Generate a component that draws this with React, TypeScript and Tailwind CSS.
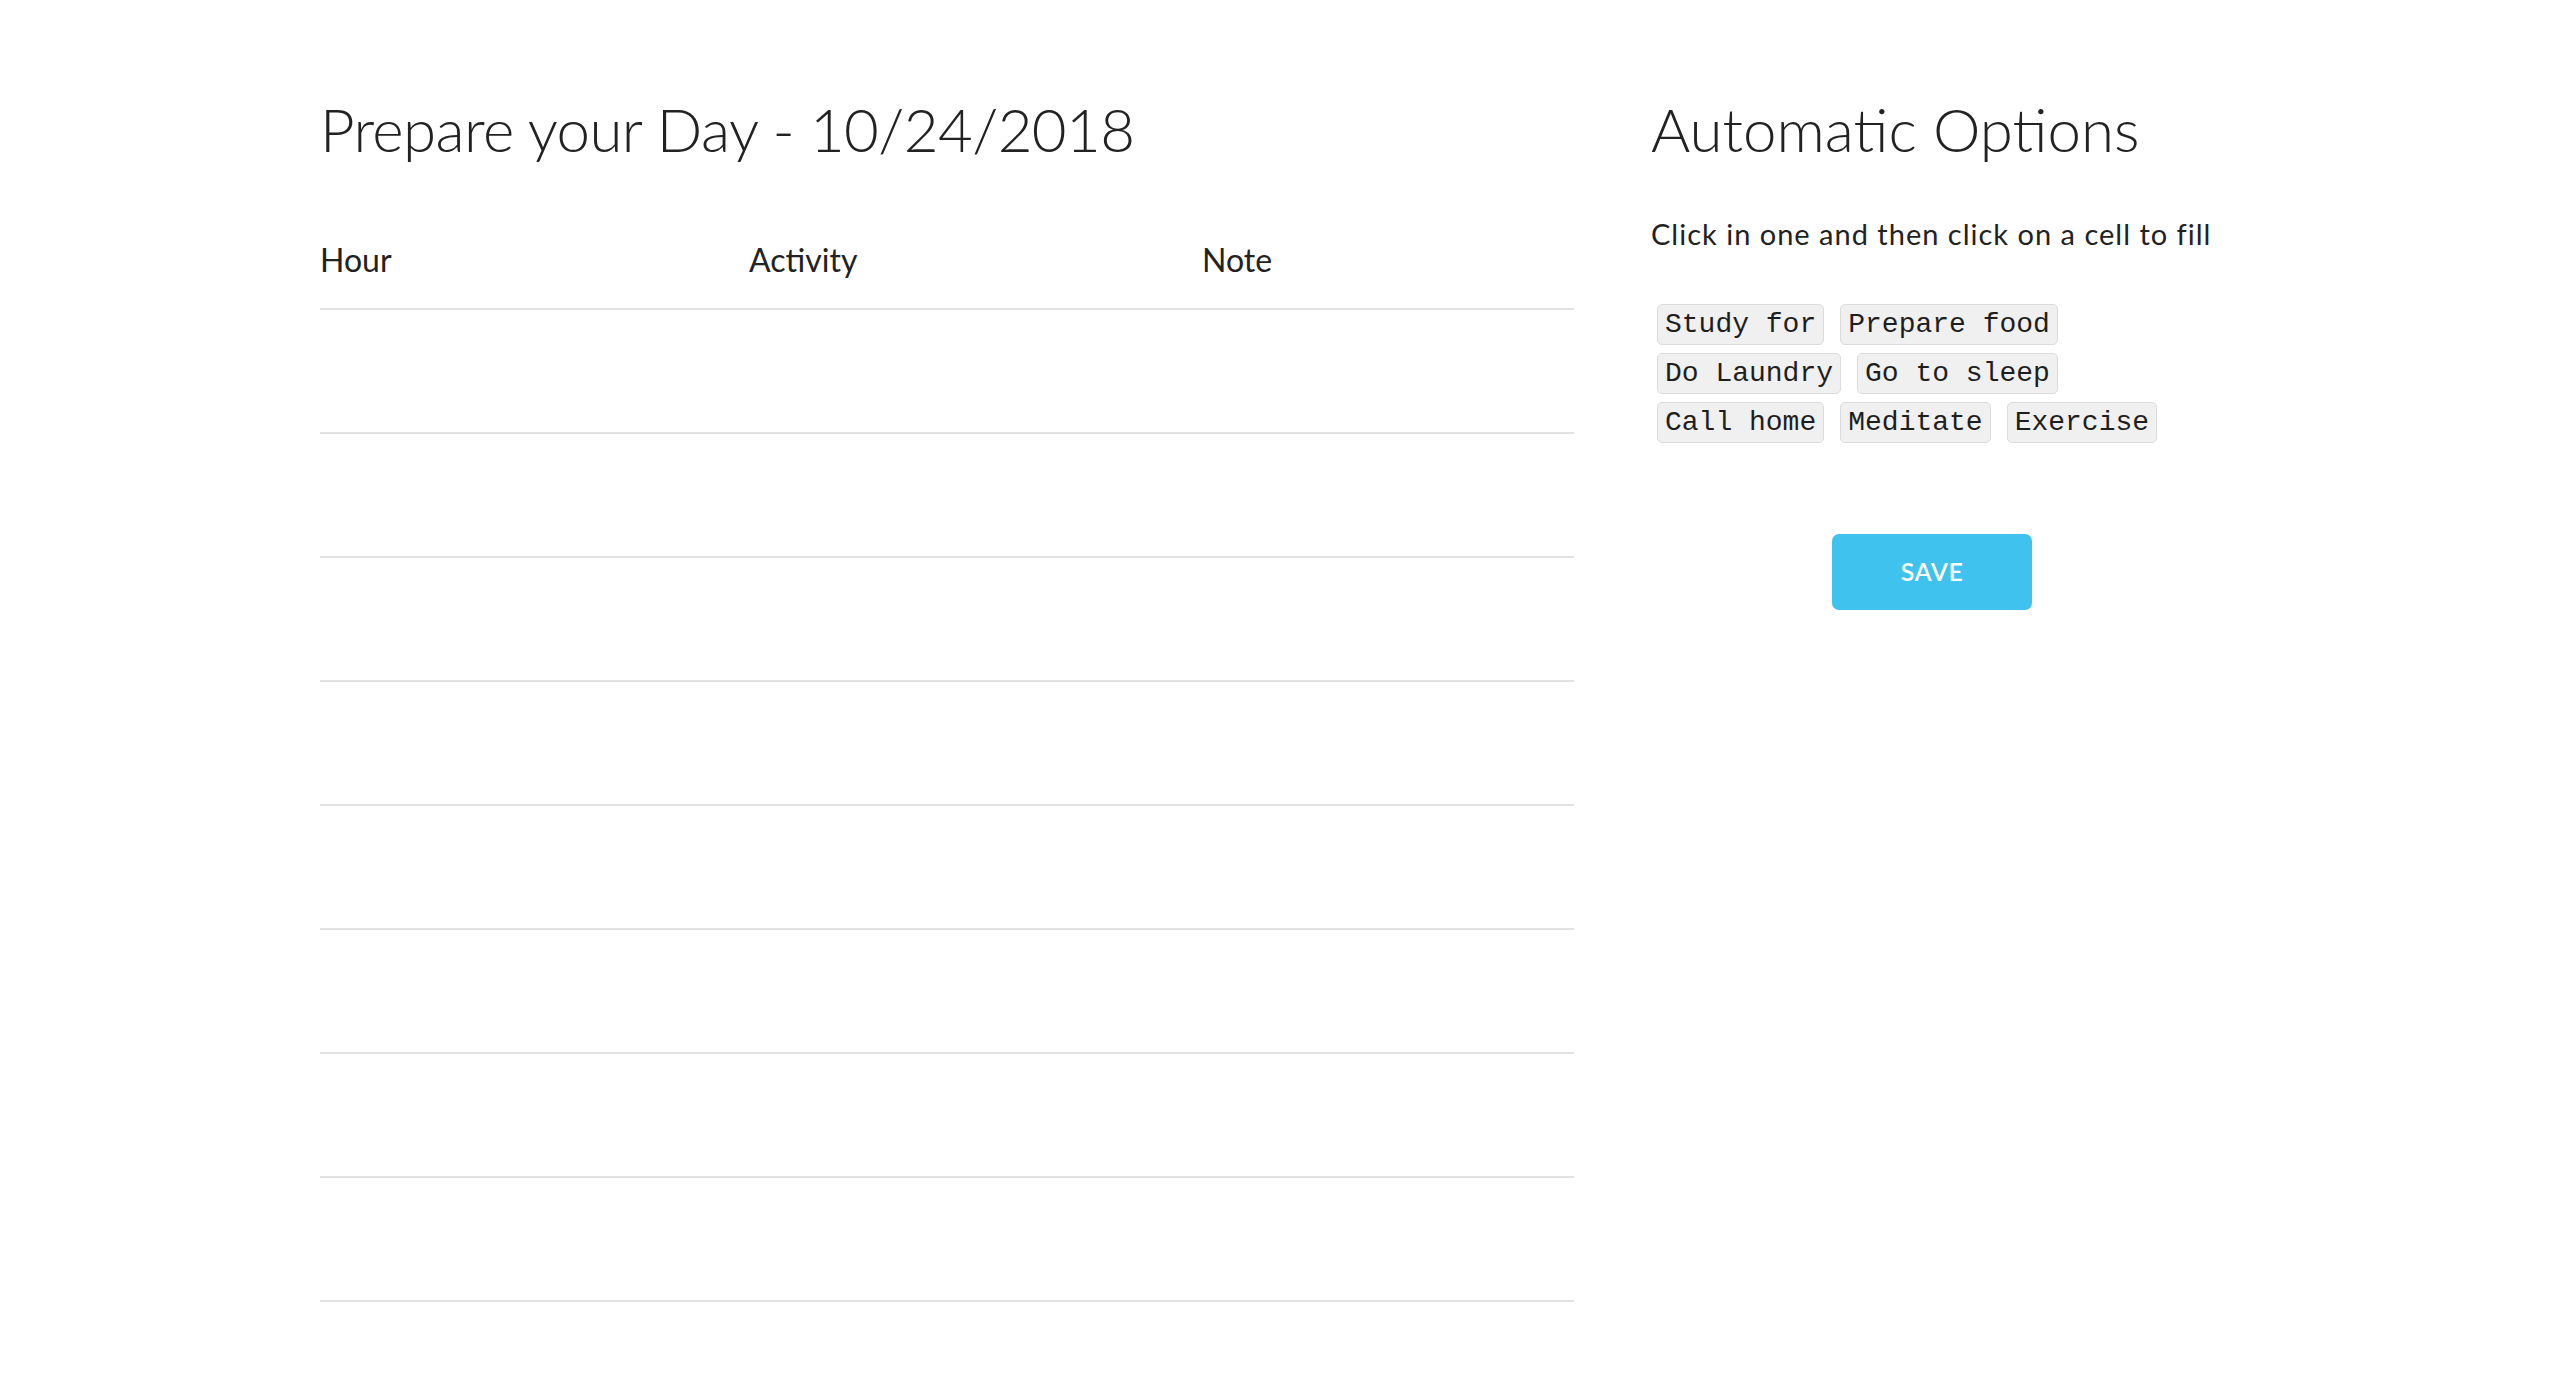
import React from "react";

const chipRows = [
  ["Study for", "Prepare food"],
  ["Do Laundry", "Go to sleep"],
  ["Call home", "Meditate", "Exercise"],
];

const hours = Array.from({ length: 8 }, (_, i) => i);

function Chip(props: { label: string }) {
  return (
    <span className="inline-block whitespace-pre rounded-[5px] border border-[#dcdcdc] bg-[#f0f0f0] px-[7px] py-[3px] text-[28px] leading-[33px] text-[#1e1e1e] font-['Liberation_Mono',monospace]">
      {props.label}
    </span>
  );
}

export default function App() {
  return (
    <div className="min-h-screen w-full bg-white text-[#222] font-['Lato',sans-serif]">
      <div className="flex pl-[320px] pt-[93px]">
        <div className="w-[1254px]">
          <h1 className="text-[60px] font-light leading-[72px] tracking-[-0.6px]">
            Prepare your Day - 10/24/2018
          </h1>
          <div className="mt-[76px] grid grid-cols-[429px_453px_1fr] border-b-2 border-[#e2e2e2] pb-[29px] text-[32px] leading-[38px]">
            <div>Hour</div>
            <div>Activity</div>
            <div>Note</div>
          </div>
          {hours.map((h) => (
            <div
              key={h}
              className="grid h-[124px] grid-cols-[429px_453px_1fr] border-b-2 border-[#e2e2e2]"
            >
              <div></div>
              <div></div>
              <div></div>
            </div>
          ))}
        </div>
        <div className="ml-[77px] flex w-[562px] flex-col">
          <h2 className="text-[60px] font-light leading-[72px]">
            Automatic Options
          </h2>
          <p className="mt-[52px] whitespace-nowrap text-[29px] leading-[34px] tracking-[1px]">
            Click in one and then click on a cell to fill
          </p>
          <div className="mt-[53px] flex flex-col gap-y-[8px] pl-[6px]">
            {chipRows.map((row, i) => (
              <div key={i} className="flex gap-x-[16px]">
                {row.map((c) => (
                  <Chip key={c} label={c} />
                ))}
              </div>
            ))}
          </div>
          <button className="mt-[91px] h-[76px] w-[200px] self-center rounded-[7px] bg-[#40c2ee] text-[25px] font-semibold tracking-[0.5px] text-white">
            SAVE
          </button>
        </div>
      </div>
    </div>
  );
}
